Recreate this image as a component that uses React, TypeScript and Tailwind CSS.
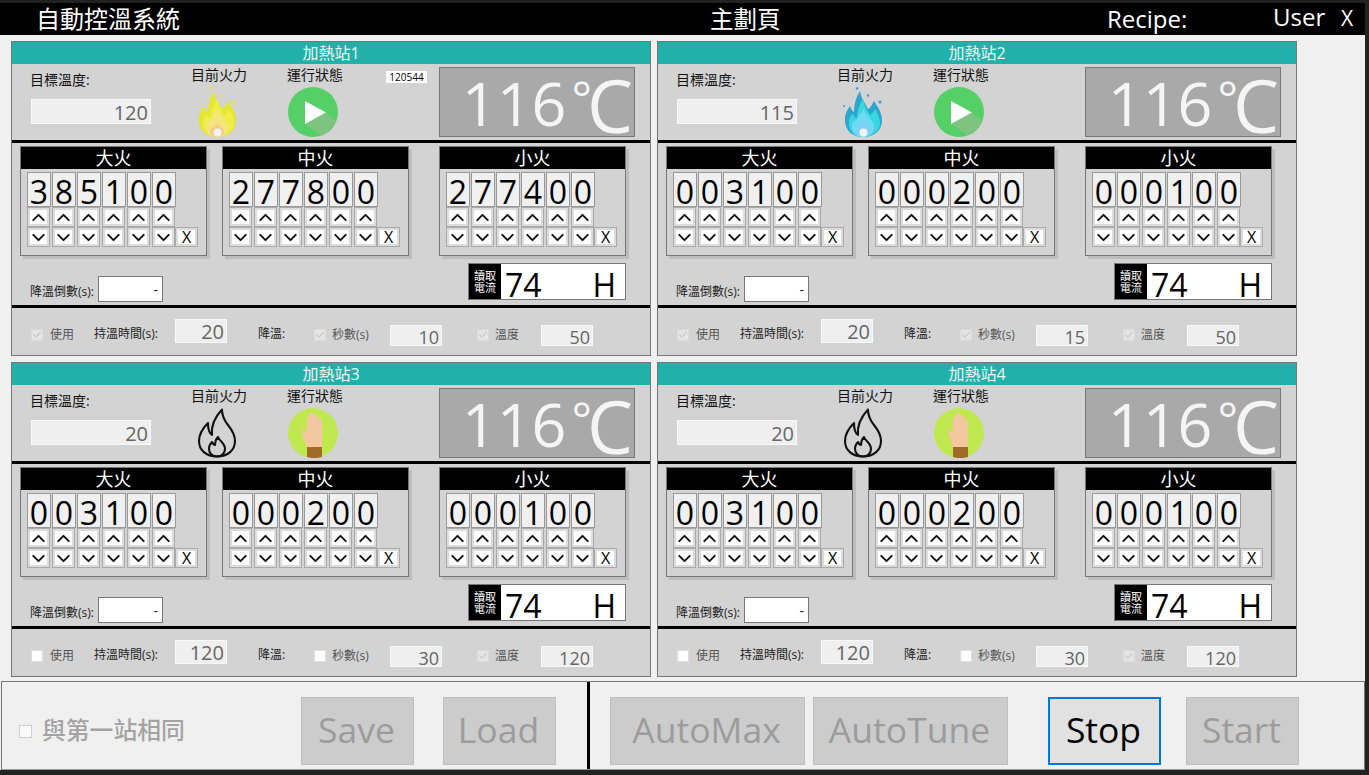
import { ChevronDown, ChevronUp, Check } from "lucide-react"

type Station = {
  name: string
  target: string
  fire: "yellow" | "blue" | "off"
  running: boolean
  badge?: string
  big: string
  mid: string
  small: string
  use: boolean
  hold: string
  secOn: boolean
  sec: string
  temp: string
}

const stations: Station[] = [
  { name: "加熱站1", target: "120", fire: "yellow", running: true, badge: "120544", big: "385100", mid: "277800", small: "277400", use: true, hold: "20", secOn: true, sec: "10", temp: "50" },
  { name: "加熱站2", target: "115", fire: "blue", running: true, big: "003100", mid: "000200", small: "000100", use: true, hold: "20", secOn: true, sec: "15", temp: "50" },
  { name: "加熱站3", target: "20", fire: "off", running: false, big: "003100", mid: "000200", small: "000100", use: false, hold: "120", secOn: false, sec: "30", temp: "120" },
  { name: "加熱站4", target: "20", fire: "off", running: false, big: "003100", mid: "000200", small: "000100", use: false, hold: "120", secOn: false, sec: "30", temp: "120" },
]

function Flame({ colors }: { colors: string[] }) {
  return (
    <svg width="40" height="50" viewBox="0 0 40 50">
      <circle cx="14" cy="1.5" r="1.3" fill={colors[0]} />
      <circle cx="25" cy="8.5" r="1.2" fill={colors[0]} />
      <circle cx="1" cy="19" r="1" fill={colors[0]} />
      <circle cx="37" cy="15" r="1.5" fill={colors[0]} />
      <path d="M20 50C8 50 1 42 2 31C2 27 4 23 7 19C8 22 9 24 11 25C11 17 13 10 17 4C18 11 22 16 25 22C27 21 29 18 31 14C35 20 39 26 39 33C39 43 32 50 20 50Z" fill={colors[0]} />
      <path d="M20 50C11 50 6 44 6 36C6 31 8 28 10 27C11 30 12 31 14 31C14 25 16 18 20 12C21 19 25 24 27 28C29 27 31 24 32 22C35 27 37 31 37 36C37 44 29 50 20 50Z" fill={colors[1]} />
      <path d="M20 50C13 50 9 45 9 40C9 36 11 33 13 34C14 30 18 26 21 22C22 27 26 29 28 33C30 35 31 37 31 41C31 46 26 50 20 50Z" fill={colors[2]} />
      <path d="M20 50C15 50 13 47 13 44C13 41 16 40 17 41C18 39 20 37 21 36C22 39 27 41 27 44C27 47 25 50 20 50Z" fill={colors[3]} />
      <circle cx="20.5" cy="45.5" r="4" fill={colors[4]} />
    </svg>
  )
}

function OutlineFlame() {
  return (
    <svg width="40" height="50" viewBox="0 0 40 50" fill="none" stroke="#111" strokeWidth="2.1" strokeLinejoin="round">
      <path d="M20 48.5C9 48.5 2 42 2 33C2 26 6 20 11 15C11 21 12 25 15 27C14 18 18 9 25 1.5C25 8 27 12 31 17C35 22 38 27 38 33C38 42 31 48.5 20 48.5Z" />
      <path d="M20 48.5C15 48.5 12 45 12 41C12 38 13 36 15 34C16 36 17 37 18 37C18 34 19 31 21 29C22 33 28 35 28 41C28 45 25 48.5 20 48.5Z" />
    </svg>
  )
}

function PlayIcon() {
  return (
    <svg width="50" height="50" viewBox="0 0 50 50">
      <circle cx="25" cy="25" r="25" fill="#55d066" />
      <path d="M17 37L38 26L48.5 34A25 25 0 0 1 34 48.5Z" fill="#7cc47f" />
      <path d="M17 14V37L38 25.5Z" fill="#fff" />
    </svg>
  )
}

function HandIcon() {
  return (
    <svg width="50" height="50" viewBox="0 0 50 50">
      <circle cx="25" cy="25" r="25" fill="#c0e84f" />
      <path d="M19 39L16 31C14 27 13 23 14 20L17 23L19 25V10C19 8 22 8 22 10V6C22 4 26 4 26 6V8C26 7 30 7 30 9V12C30 11 34 11 34 13V31L34 39Z" fill="#f3c8a0" />
      <path d="M19 39H34V49A25 25 0 0 1 19 49Z" fill="#a06b28" />
    </svg>
  )
}

function FireIcon({ s }: { s: Station }) {
  if (s.fire === "yellow") return <Flame colors={["#e3e633", "#eeee45", "#f5e67c", "#f9c98a", "#f2f2f2"]} />
  if (s.fire === "blue") return <Flame colors={["#2ca6cf", "#38d8dc", "#6fd8f5", "#86cdfb", "#eef5f5"]} />
  return <OutlineFlame />
}

function FireGroup({ title, digits, className }: { title: string; digits: string; className: string }) {
  const list = digits.split("")
  return (
    <div className={`w-[187px] h-[110px] shrink-0 border border-[#777] bg-[#d3d3d3] shadow-[3px_3px_0_#bdbdbd] ${className}`}>
      <div className="h-[22px] bg-black text-white text-center text-[18px] leading-[22px]">{title}</div>
      <div className="flex gap-px pl-[6px] pt-[3px]">
        {list.map((d, i) => (
          <div key={i} className="w-[24px] h-[35px] bg-[#f0f0f0] border border-[#999] text-[32px] leading-[37px] text-center text-black">
            {d}
          </div>
        ))}
      </div>
      <div className="flex gap-[2px] pl-[6px]">
        {list.map((_, i) => (
          <button key={i} className="w-[23px] h-[20px] bg-white border border-[#aaa] shadow-[inset_0_0_0_2px_#dcdcdc] flex items-center justify-center">
            <ChevronUp className="shrink-0" size={21} strokeWidth={2.2} color="#111" />
          </button>
        ))}
      </div>
      <div className="flex gap-[2px] pl-[6px]">
        {list.map((_, i) => (
          <button key={i} className="w-[23px] h-[20px] bg-white border border-[#aaa] shadow-[inset_0_0_0_2px_#dcdcdc] flex items-center justify-center">
            <ChevronDown className="shrink-0" size={21} strokeWidth={2.2} color="#111" />
          </button>
        ))}
        <button className="w-[23px] h-[20px] -ml-[2px] bg-white border border-[#aaa] shadow-[inset_0_0_0_2px_#dcdcdc] text-[16px] leading-[18px] text-black">X</button>
      </div>
    </div>
  )
}

function Tick({ on }: { on: boolean }) {
  return (
    <span className={`w-[12px] h-[12px] shrink-0 flex items-center justify-center border ${on ? "bg-[#e4e4e4] border-[#dcdcdc]" : "bg-white border-[#dedede]"}`}>
      {on && <Check size={10} strokeWidth={1.8} color="#a9a9a9" />}
    </span>
  )
}

function ValueBox({ value, className }: { value: string; className: string }) {
  return (
    <div className={`shrink-0 bg-[#efefef] border border-[#f9f9f9] text-right pr-[2px] text-[#666] ${className}`}>
      {value}
    </div>
  )
}

function Panel({ s }: { s: Station }) {
  return (
    <div className="h-[315px] border border-[#777] bg-[#d3d3d3] flex flex-col">
      <div className="h-[22px] bg-[#20b2aa] text-[#f2f2f2] text-center text-[16px] leading-[22px]">{s.name}</div>

      <div className="h-[76px] flex pl-[18px] shrink-0">
        <div className="w-[161px] shrink-0 pt-[8px]">
          <div className="text-[14px] leading-[16px] text-[#111]">目標溫度:</div>
          <ValueBox value={s.target} className="mt-[11px] ml-px w-[120px] h-[25px] text-[20px] leading-[25px]" />
        </div>
        <div className="w-[55px] shrink-0 pt-[3px] flex flex-col items-start">
          <div className="text-[14px] leading-[16px] text-[#111] whitespace-nowrap">目前火力</div>
          <div className="mt-[4px] ml-[6px]"><FireIcon s={s} /></div>
        </div>
        <div className="w-[55px] ml-[41px] shrink-0 pt-[3px] flex flex-col items-start">
          <div className="text-[14px] leading-[16px] text-[#111] whitespace-nowrap">運行狀態</div>
          <div className="mt-[4px] ml-px">{s.running ? <PlayIcon /> : <HandIcon />}</div>
        </div>
        <div className="w-[41px] ml-[44px] shrink-0 pt-[7px]">
          {s.badge && <div className="h-[12px] bg-white text-[10px] leading-[12px] text-black text-center">{s.badge}</div>}
        </div>
        <div className="w-[196px] h-[70px] mt-[3px] ml-[12px] shrink-0 bg-[#a9a9a9] border border-[#777] flex justify-end items-start pr-[1px] whitespace-nowrap text-[#f5f5f5]">
          <span className="text-[61px] leading-[70px]">116</span>
          <span className="text-[48px] leading-[59px] ml-[5px]">°</span>
          <span className="text-[73px] leading-[74px] -ml-[5px]">C</span>
        </div>
      </div>

      <div className="h-[3px] bg-black shrink-0" />

      <div className="h-[162px] shrink-0 pt-[3px] pl-[8px]">
        <div className="flex">
          <FireGroup title="大火" digits={s.big} className="" />
          <FireGroup title="中火" digits={s.mid} className="ml-[15px]" />
          <FireGroup title="小火" digits={s.small} className="ml-[30px]" />
        </div>
        <div className="flex pl-[10px] pt-[7px] pr-[24px]">
          <div className="mt-[20px] text-[12px] leading-[18px] text-[#222] w-[68px] whitespace-nowrap">降溫倒數(s):</div>
          <div className="mt-[13px] w-[65px] h-[26px] bg-white border border-[#777] text-right pr-[4px] text-[14px] leading-[26px] text-[#222]">-</div>
          <div className="ml-auto w-[158px] h-[37px] border border-[#777] bg-white flex">
            <div className="w-[32px] bg-black text-white text-[11px] leading-[12px] text-center pt-[6px]">讀取<br />電流</div>
            <div className="flex-1 flex justify-between pl-[4px] pr-[9px] text-[32px] h-[35px] leading-[42px] text-black">
              <span>74</span>
              <span>H</span>
            </div>
          </div>
        </div>
      </div>

      <div className="h-[3px] bg-black shrink-0" />

      <div className="flex-1 flex items-start pl-[19px] text-[12px] leading-[16px] text-[#222]">
        <div className="w-[63px] shrink-0 flex items-center gap-[7px] mt-[19px] text-[#555]"><Tick on={s.use} />使用</div>
        <div className="w-[81px] shrink-0 mt-[18px] whitespace-nowrap">持溫時間(s):</div>
        <ValueBox value={s.hold} className="w-[52px] h-[24px] mt-[11px] text-[20px] leading-[24px]" />
        <div className="w-[56px] ml-[31px] shrink-0 mt-[18px]">降溫:</div>
        <div className="w-[76px] shrink-0 flex items-center gap-[6px] mt-[19px] text-[#555] whitespace-nowrap"><Tick on={s.secOn} />秒數(s)</div>
        <ValueBox value={s.sec} className="w-[52px] h-[21px] mt-[17px] text-[18px] leading-[23px]" />
        <div className="w-[64px] ml-[35px] shrink-0 flex items-center gap-[6px] mt-[19px] text-[#555]"><Tick on={true} />溫度</div>
        <ValueBox value={s.temp} className="w-[52px] h-[21px] mt-[17px] text-[18px] leading-[23px]" />
      </div>
    </div>
  )
}

function ActionButton({ label, className, active }: { label: string; className: string; active?: boolean }) {
  return (
    <button
      disabled={!active}
      className={`h-[68px] shrink-0 pr-[2px] pb-[4px] text-[35.5px] font-medium leading-[60px] ${active ? "bg-[#e1e1e1] border-2 border-[#0078d7] text-black" : "bg-[#cccccc] border border-[#bfbfbf] text-[#9c9c9c]"} ${className}`}
    >
      {label}
    </button>
  )
}

export default function App() {
  return (
    <div className="w-[1369px] h-[775px] bg-[#222] overflow-hidden [font-family:'Open_Sans','Noto_Sans_CJK_TC',sans-serif]">
      <div className="h-[3px]" />
      <div className="w-[1365px] h-[767px] bg-[#f0f0f0]">
        <div className="h-[32px] bg-black text-white flex items-center whitespace-nowrap">
          <div className="w-[710px] pl-[36px] text-[24px] leading-[32px]">自動控溫系統</div>
          <div className="w-[397px] text-[23.5px] leading-[32px]">主劃頁</div>
          <div className="w-[166px] text-[24px] leading-[32px]">Recipe:</div>
          <div className="w-[68px] text-[24px] leading-[32px] -mt-[4px]">User</div>
          <div className="text-[21px] leading-[32px] -mt-[3px]">X</div>
        </div>

        <div className="grid grid-cols-[640px_640px] gap-[6px] pl-[11px] pt-[6px]">
          {stations.map((s) => (
            <Panel key={s.name} s={s} />
          ))}
        </div>

        <div className="mt-[4px] ml-[1px] h-[89px] border border-[#777] border-b-[#999] flex">
          <div className="w-[585px] shrink-0 flex items-start pt-[15px]">
            <div className="h-[68px] flex items-center ml-[17px] w-[165px] shrink-0">
              <span className="w-[13px] h-[13px] bg-[#fafafa] border border-[#cfcfcf] shrink-0" />
              <span className="ml-[10px] text-[23.8px] font-medium text-[#a3a3a3] whitespace-nowrap">與第一站相同</span>
            </div>
            <ActionButton label="Save" className="w-[113px] ml-[117px]" />
            <ActionButton label="Load" className="w-[113px] ml-[29px]" />
          </div>
          <div className="w-[3px] bg-black shrink-0" />
          <div className="flex-1 flex items-start pt-[15px]">
            <ActionButton label="AutoMax" className="w-[195px] ml-[20px]" />
            <ActionButton label="AutoTune" className="w-[195px] ml-[8px]" />
            <ActionButton label="Stop" className="w-[113px] ml-[40px]" active />
            <ActionButton label="Start" className="w-[113px] ml-[25px]" />
          </div>
        </div>
      </div>
    </div>
  )
}
